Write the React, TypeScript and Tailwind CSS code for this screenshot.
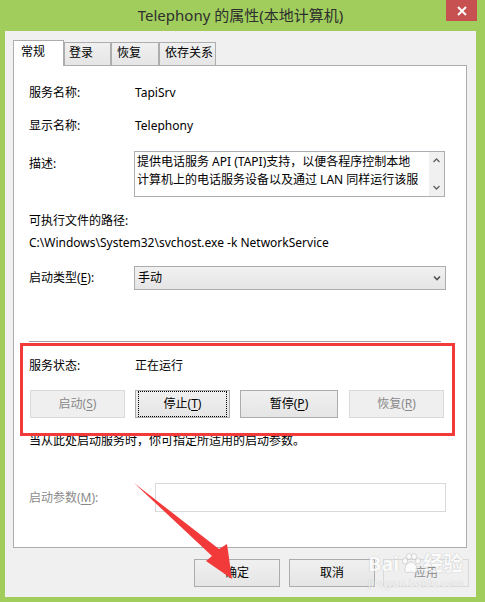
import React from "react";

const font = { fontFamily: '"Noto Sans", "Noto Sans CJK SC", sans-serif' };

function U({ children }: { children: React.ReactNode }) {
  return <span className="underline underline-offset-2">{children}</span>;
}

function Btn({
  children,
  w,
  disabled,
  focus,
  className = "",
}: {
  children: React.ReactNode;
  w: string;
  disabled?: boolean;
  focus?: boolean;
  className?: string;
}) {
  return (
    <div
      className={`${w} h-[28px] flex items-center justify-center border text-[12px] ${
        disabled
          ? "border-[#d9d9d9] bg-[#efefef] text-[#8a8a8a]"
          : "border-[#acacac] bg-gradient-to-b from-[#f0f0f0] to-[#e5e5e5] text-black"
      } ${className}`}
    >
      {focus ? (
        <div className="w-full h-full m-[2px] border border-dotted border-black flex items-center justify-center">
          {children}
        </div>
      ) : (
        children
      )}
    </div>
  );
}

export default function App() {
  return (
    <div
      className="relative w-[485px] h-[602px] bg-[#a0cd5c] flex flex-col overflow-hidden"
      style={font}
    >
      {/* title bar */}
      <div className="relative h-[31px] flex items-center justify-center text-[15px] text-[#2e2e2e] pr-[4px]">
        Telephony 的属性(本地计算机)
        <div className="absolute left-[446px] top-0 w-[31px] h-[21px] bg-[#c75050] flex items-center justify-center">
          <svg width="10" height="10" viewBox="0 0 10 10">
            <path d="M1 1 L9 9 M9 1 L1 9" stroke="white" strokeWidth="2" />
          </svg>
        </div>
      </div>

      {/* body */}
      <div className="ml-[5px] w-[471px] h-[566px] bg-[#f0f0f0] flex flex-col">
        {/* tabs */}
        <div className="mt-[9px] ml-[8px] flex items-end text-[12px] text-black">
          <div className="relative z-10 w-[51px] h-[26px] -mb-[1px] bg-white border border-b-0 border-[#adadad] flex items-start pl-[7px] pt-[2px]">
            常规
          </div>
          <div className="w-[47px] h-[23px] bg-gradient-to-b from-[#f0f0f0] to-[#e5e5e5] border border-b-0 border-[#adadad] pl-[4px] pt-[1px]">
            登录
          </div>
          <div className="w-[48px] h-[23px] bg-gradient-to-b from-[#f0f0f0] to-[#e5e5e5] border border-b-0 border-[#adadad] pl-[5px] pt-[1px]">
            恢复
          </div>
          <div className="w-[57px] h-[23px] bg-gradient-to-b from-[#f0f0f0] to-[#e5e5e5] border border-b-0 border-[#adadad] pl-[5px] pt-[1px]">
            依存关系
          </div>
        </div>

        {/* pane */}
        <div className="ml-[8px] w-[454px] h-[483px] bg-white border border-[#adadad] flex flex-col pl-[15px] pr-[20px] text-[12px] text-black">
          <div className="mt-[17px] h-[20px] flex items-center">
            <div className="w-[106px]">服务名称:</div>
            <div>TapiSrv</div>
          </div>
          <div className="mt-[13px] h-[20px] flex items-center">
            <div className="w-[106px]">显示名称:</div>
            <div>Telephony</div>
          </div>
          <div className="mt-[15px] h-[46px] flex">
            <div className="w-[105px] h-[20px] mt-[3px] flex items-center">描述:</div>
            <div className="w-[311px] h-[46px] border border-[#abadb3] flex">
              <div className="flex-1 pl-[2px] pt-[1px] leading-[18px] overflow-hidden whitespace-nowrap">
                <div>提供电话服务 API (TAPI)支持，以便各程序控制本地</div>
                <div>计算机上的电话服务设备以及通过 LAN 同样运行该服</div>
              </div>
              <div className="w-[15px] h-full bg-[#f0f0f0] flex flex-col items-center justify-between py-[6px]">
                <svg width="7" height="5" viewBox="0 0 7 5">
                  <path d="M0.5 4 L3.5 1 L6.5 4" stroke="#606060" strokeWidth="1.3" fill="none" />
                </svg>
                <svg width="7" height="5" viewBox="0 0 7 5">
                  <path d="M0.5 1 L3.5 4 L6.5 1" stroke="#606060" strokeWidth="1.3" fill="none" />
                </svg>
              </div>
            </div>
          </div>
          <div className="mt-[14px] h-[20px] flex items-center">可执行文件的路径:</div>
          <div className="mt-[2px] h-[20px] flex items-center whitespace-nowrap">
            C:\Windows\System32\svchost.exe -k NetworkService
          </div>
          <div className="mt-[13px] h-[24px] flex items-center">
            <div className="w-[105px]">
              启动类型(<U>E</U>):
            </div>
            <div className="w-[312px] h-[24px] border border-[#acacac] bg-gradient-to-b from-[#f0f0f0] to-[#e5e5e5] flex items-center justify-between pl-[3px] pr-[4px]">
              <span>手动</span>
              <svg width="8" height="6" viewBox="0 0 8 6">
                <path d="M1 1.5 L4 4.5 L7 1.5" stroke="#505050" strokeWidth="1.6" fill="none" />
              </svg>
            </div>
          </div>
          <div className="mt-[51px] w-[412px] h-[1px] bg-[#a0a0a0]" />
          <div className="mt-[14px] h-[20px] flex items-center">
            <div className="w-[106px]">服务状态:</div>
            <div>正在运行</div>
          </div>
          <div className="mt-[14px] flex">
            <Btn w="w-[95px]" disabled className="ml-[1px]">
              启动(<U>S</U>)
            </Btn>
            <Btn w="w-[95px]" focus className="ml-[10px]">
              停止(<U>T</U>)
            </Btn>
            <Btn w="w-[98px]" className="ml-[10px]">
              暂停(<U>P</U>)
            </Btn>
            <Btn w="w-[95px]" disabled className="ml-[11px]">
              恢复(<U>R</U>)
            </Btn>
          </div>
          <div className="mt-[13px] h-[20px] flex items-center">
            当从此处启动服务时，你可指定所适用的启动参数。
          </div>
          <div className="mt-[32px] h-[29px] flex items-center">
            <div className="w-[126px] text-[#8a8a8a]">
              启动参数(<U>M</U>):
            </div>
            <div className="w-[291px] h-[29px] border border-[#d9d9d9] bg-white" />
          </div>
        </div>

        {/* bottom buttons */}
        <div className="mt-[11px] flex">
          <Btn w="w-[86px]" className="ml-[189px]">确定</Btn>
          <Btn w="w-[86px]" className="ml-[9px]">取消</Btn>
          <Btn w="w-[86px]" disabled className="ml-[8px]">应用</Btn>
        </div>
      </div>

      {/* red highlight box */}
      <div className="absolute left-[20px] top-[343px] w-[435px] h-[93px] border-[3px] border-[#f23a3a] pointer-events-none" />

      {/* baidu watermark */}
      <div className="absolute left-[368px] top-[553px] pointer-events-none flex flex-col items-start opacity-75">
        <div className="flex items-end text-[20px] font-bold leading-[22px] text-white" style={{ textShadow: "0 0 1px #9a9a9a" }}>
          <span>Bai</span>
          <svg width="22" height="22" viewBox="0 0 22 22" className="mx-[1px]">
            <ellipse cx="5" cy="8" rx="2.5" ry="3" fill="white" stroke="#b0b0b0" strokeWidth="0.6" />
            <ellipse cx="9" cy="3.5" rx="2.5" ry="3" fill="white" stroke="#b0b0b0" strokeWidth="0.6" />
            <ellipse cx="14" cy="3.5" rx="2.5" ry="3" fill="white" stroke="#b0b0b0" strokeWidth="0.6" />
            <ellipse cx="18" cy="8" rx="2.5" ry="3" fill="white" stroke="#b0b0b0" strokeWidth="0.6" />
            <path d="M11 9 C7 9 4 15 5 18 C6 21 9 19 11 19 C13 19 16 21 17 18 C18 15 15 9 11 9 Z" fill="white" stroke="#b0b0b0" strokeWidth="0.6" />
          </svg>
          <span>经验</span>
        </div>
        <div className="text-[11px] leading-[13px] text-white mt-[1px]" style={{ textShadow: "0 0 1px #9a9a9a" }}>
          jingyan.baidu.com
        </div>
      </div>

      {/* red arrow */}
      <svg className="absolute left-0 top-0 pointer-events-none" width="485" height="602" viewBox="0 0 485 602">
        <polygon
          points="134,483 219,549 227,544 232,579 206,561 212,556"
          fill="#f23a3a"
        />
      </svg>
    </div>
  );
}
